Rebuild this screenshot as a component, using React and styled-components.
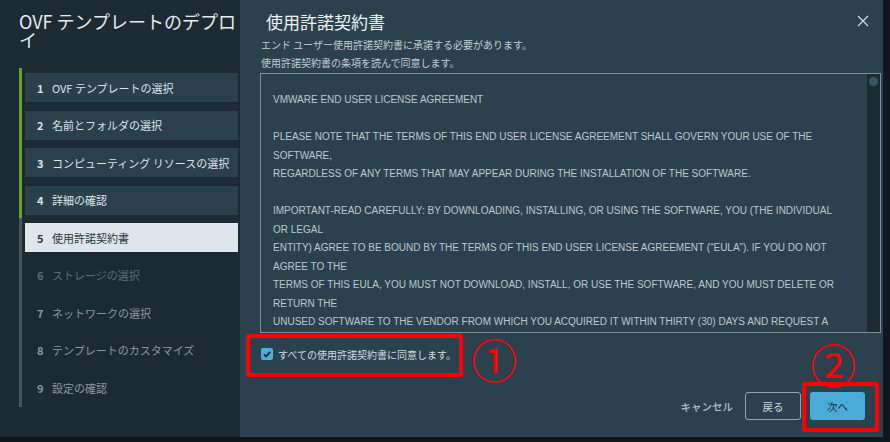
import React from "react";
import styled, { createGlobalStyle } from "styled-components";

const GlobalStyle = createGlobalStyle`
  html, body { margin: 0; padding: 0; background: #10181c; }
  body { font-family: "Noto Sans CJK JP", "Noto Sans", sans-serif; }
  * { box-sizing: border-box; }
`;

const Screen = styled.div`
  width: 890px;
  height: 442px;
  background: #10181c;
  display: flex;
  align-items: flex-start;
  overflow: hidden;
`;

const Sidebar = styled.aside`
  width: 240px;
  height: 437px;
  flex: none;
  background: #1c2b33;
  padding: 12px 0 0 19px;
  display: flex;
  flex-direction: column;
`;

const WizardTitle = styled.h1`
  margin: 0;
  width: 218px;
  font-size: 18px;
  line-height: 18px;
  font-weight: 400;
  color: #e4eaed;
`;

const StepsArea = styled.div`
  margin-top: 20px;
  display: flex;
  gap: 3px;
`;

const Rail = styled.div`
  width: 3px;
  display: flex;
  flex-direction: column;
`;

const RailDone = styled.div`
  height: 150px;
  background: #5fa620;
`;

const RailRest = styled.div`
  flex: 1;
  background: #46565c;
`;

const StepList = styled.ol`
  list-style: none;
  margin: 0;
  padding: 5px 0;
  display: flex;
  flex-direction: column;
  gap: 8.5px;
`;

const stepColors = {
  done: { bg: "#2a414c", fg: "#dce4e8" },
  current: { bg: "#dde7eb", fg: "#2a3a42" },
  faded: { bg: "transparent", fg: "#5d6c72" },
  todo: { bg: "transparent", fg: "#8b989d" },
};

const StepItem = styled.li`
  width: 213px;
  height: 29px;
  display: flex;
  align-items: center;
  padding-left: 12px;
  font-size: 11px;
  background: ${(p) => stepColors[p.$state].bg};
  color: ${(p) => stepColors[p.$state].fg};
`;

const StepNum = styled.span`
  width: 15px;
  font-weight: 700;
`;

const Main = styled.section`
  width: 643px;
  height: 437px;
  flex: none;
  background: #2b424e;
  display: flex;
  flex-direction: column;
`;

const Header = styled.header`
  height: 36px;
  padding: 6px 14px 0 26px;
  display: flex;
  align-items: center;
  justify-content: space-between;
`;

const PageTitle = styled.h2`
  margin: 0;
  font-size: 17px;
  font-weight: 400;
  color: #eef2f4;
`;

const CloseButton = styled.button`
  border: none;
  background: none;
  padding: 0;
  width: 12px;
  height: 12px;
  display: flex;
`;

const Subtitle = styled.p`
  margin: 0;
  padding-left: 21px;
  font-size: 10px;
  line-height: 18px;
  color: #c2cdd2;
`;

const LicenseBox = styled.div`
  margin: 1px 2px 0 20px;
  height: 260px;
  border: 1px solid #7d8f96;
  display: flex;
`;

const LicenseText = styled.div`
  flex: 1;
  overflow: hidden;
  padding: 17px 12px 0 12px;
  font-family: "Liberation Sans", Arial, sans-serif;
  font-size: 10px;
  line-height: 18.5px;
  color: #bcc8cd;
`;

const LicenseLine = styled.div`
  white-space: pre;
  height: 18.5px;
`;

const ScrollTrack = styled.div`
  width: 13px;
  background: #1c2a31;
  padding: 3px 2px;
`;

const ScrollThumb = styled.div`
  width: 9px;
  height: 9px;
  border-radius: 50%;
  background: #3e5561;
`;

const CheckRow = styled.label`
  position: relative;
  margin: 12px 0 0 21px;
  height: 18px;
  display: flex;
  align-items: center;
  gap: 5px;
  font-size: 10px;
  color: #d3dce0;
`;

const CheckBox = styled.span`
  width: 12px;
  height: 12px;
  border-radius: 2px;
  background: #49aedc;
  display: flex;
`;

const RedFrame = styled.span`
  position: absolute;
  border: 4px solid #ff0000;
  border-radius: 2px;
  pointer-events: none;
  left: ${(p) => p.$left}px;
  top: ${(p) => p.$top}px;
  width: ${(p) => p.$w}px;
  height: ${(p) => p.$h}px;
`;

const CircledMark = styled.span`
  position: absolute;
  left: ${(p) => p.$left}px;
  top: ${(p) => p.$top}px;
  font-family: "Noto Sans CJK JP", sans-serif;
  font-size: 46px;
  line-height: 46px;
  font-weight: 400;
  color: #ff0000;
  pointer-events: none;
`;

const Footer = styled.footer`
  margin-top: auto;
  padding: 0 18px 17px 0;
  display: flex;
  justify-content: flex-end;
  align-items: center;
`;

const CancelButton = styled.button`
  border: none;
  background: none;
  padding: 0;
  margin-right: 12px;
  font-family: inherit;
  font-size: 10.5px;
  font-weight: 500;
  color: #a9c4d0;
`;

const OutlineButton = styled.button`
  width: 56px;
  height: 28px;
  border: 1px solid #8fa9b4;
  border-radius: 3px;
  background: transparent;
  font-family: inherit;
  font-size: 10.5px;
  color: #cdd9de;
  padding: 0;
`;

const NextWrap = styled.div`
  position: relative;
  margin-left: 9px;
`;

const PrimaryButton = styled.button`
  width: 55px;
  height: 28px;
  border: none;
  border-radius: 3px;
  background: #4aabd9;
  font-family: inherit;
  font-size: 10.5px;
  color: #1c2b33;
  padding: 0;
  display: block;
`;

const steps = [
  { n: 1, label: "OVF テンプレートの選択", state: "done" },
  { n: 2, label: "名前とフォルダの選択", state: "done" },
  { n: 3, label: "コンピューティング リソースの選択", state: "done" },
  { n: 4, label: "詳細の確認", state: "done" },
  { n: 5, label: "使用許諾契約書", state: "current" },
  { n: 6, label: "ストレージの選択", state: "faded" },
  { n: 7, label: "ネットワークの選択", state: "todo" },
  { n: 8, label: "テンプレートのカスタマイズ", state: "todo" },
  { n: 9, label: "設定の確認", state: "todo" },
];

const license = [
  "VMWARE END USER LICENSE AGREEMENT",
  "",
  "PLEASE NOTE THAT THE TERMS OF THIS END USER LICENSE AGREEMENT SHALL GOVERN YOUR USE OF THE",
  "SOFTWARE,",
  "REGARDLESS OF ANY TERMS THAT MAY APPEAR DURING THE INSTALLATION OF THE SOFTWARE.",
  "",
  "IMPORTANT-READ CAREFULLY: BY DOWNLOADING, INSTALLING, OR USING THE SOFTWARE, YOU (THE INDIVIDUAL",
  "OR LEGAL",
  "ENTITY) AGREE TO BE BOUND BY THE TERMS OF THIS END USER LICENSE AGREEMENT (\u201CEULA\u201D). IF YOU DO NOT",
  "AGREE TO THE",
  "TERMS OF THIS EULA, YOU MUST NOT DOWNLOAD, INSTALL, OR USE THE SOFTWARE, AND YOU MUST DELETE OR",
  "RETURN THE",
  "UNUSED SOFTWARE TO THE VENDOR FROM WHICH YOU ACQUIRED IT WITHIN THIRTY (30) DAYS AND REQUEST A",
  "REFUND OF THE LICENSE FEE, IF ANY, THAT YOU PAID FOR THE SOFTWARE.",
];

export default function App() {
  return (
    <>
      <GlobalStyle />
      <Screen>
        <Sidebar>
          <WizardTitle>OVF テンプレートのデプロイ</WizardTitle>
          <StepsArea>
            <Rail>
              <RailDone />
              <RailRest />
            </Rail>
            <StepList>
              {steps.map((s) => (
                <StepItem key={s.n} $state={s.state}>
                  <StepNum>{s.n}</StepNum>
                  {s.label}
                </StepItem>
              ))}
            </StepList>
          </StepsArea>
        </Sidebar>
        <Main>
          <Header>
            <PageTitle>使用許諾契約書</PageTitle>
            <CloseButton aria-label="閉じる">
              <svg width="12" height="12" viewBox="0 0 12 12">
                <path d="M1 1 L11 11 M11 1 L1 11" stroke="#d0d9dd" strokeWidth="1.3" fill="none" />
              </svg>
            </CloseButton>
          </Header>
          <Subtitle>エンド ユーザー使用許諾契約書に承諾する必要があります。</Subtitle>
          <Subtitle>使用許諾契約書の条項を読んで同意します。</Subtitle>
          <LicenseBox>
            <LicenseText>
              {license.map((l, i) => (
                <LicenseLine key={i}>{l || "\u00a0"}</LicenseLine>
              ))}
            </LicenseText>
            <ScrollTrack>
              <ScrollThumb />
            </ScrollTrack>
          </LicenseBox>
          <CheckRow>
            <CheckBox>
              <svg width="12" height="12" viewBox="0 0 12 12">
                <path d="M3 6.3 L5.1 8.4 L9.3 3.9" stroke="#15232b" strokeWidth="1.8" fill="none" />
              </svg>
            </CheckBox>
            すべての使用許諾契約書に同意します。
            <RedFrame $left={-15} $top={-11} $w={217} $h={43} />
            <CircledMark $left={210} $top={-10}>①</CircledMark>
          </CheckRow>
          <Footer>
            <CancelButton>キャンセル</CancelButton>
            <OutlineButton>戻る</OutlineButton>
            <NextWrap>
              <PrimaryButton>次へ</PrimaryButton>
              <RedFrame $left={-8} $top={-10} $w={77} $h={50} />
              <CircledMark $left={0} $top={-52}>②</CircledMark>
            </NextWrap>
          </Footer>
        </Main>
      </Screen>
    </>
  );
}
